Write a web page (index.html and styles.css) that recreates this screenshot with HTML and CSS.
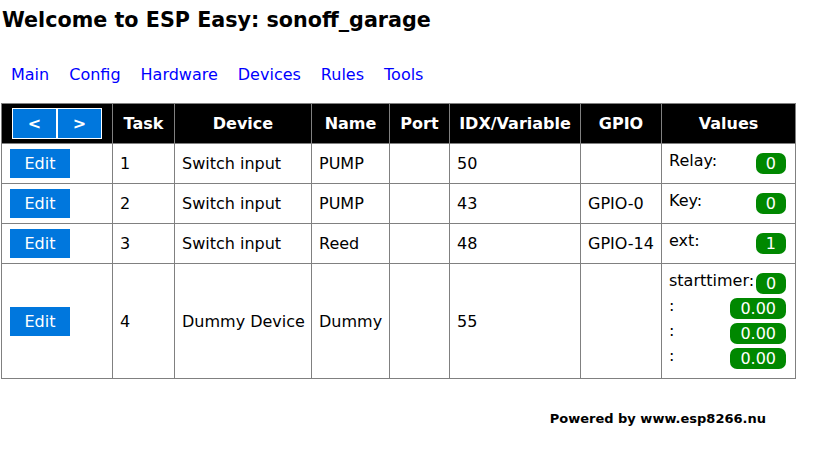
FILE: index.html
```html
<!DOCTYPE html>
<html>
<head>
<meta charset="utf-8">
<link rel="stylesheet" href="styles.css">
<title>ESP Easy</title>
</head>
<body>
<h1 class="title">Welcome to ESP Easy: sonoff_garage</h1>
<nav class="menu">
  <a class="menu-link" href="#">Main</a>
  <a class="menu-link" href="#">Config</a>
  <a class="menu-link" href="#">Hardware</a>
  <a class="menu-link" href="#">Devices</a>
  <a class="menu-link" href="#">Rules</a>
  <a class="menu-link" href="#">Tools</a>
</nav>
<table class="devices">
  <thead>
    <tr>
      <th class="c-edit"><div class="pager"><a class="btn btn-nav" href="#">&lt;</a><a class="btn btn-nav" href="#">&gt;</a></div></th>
      <th class="c-task">Task</th>
      <th class="c-device">Device</th>
      <th class="c-name">Name</th>
      <th class="c-port">Port</th>
      <th class="c-idx">IDX/Variable</th>
      <th class="c-gpio">GPIO</th>
      <th class="c-values">Values</th>
    </tr>
  </thead>
  <tbody>
    <tr>
      <td><a class="btn btn-edit" href="#">Edit</a></td>
      <td>1</td>
      <td>Switch input</td>
      <td>PUMP</td>
      <td></td>
      <td>50</td>
      <td></td>
      <td><div class="val"><span class="val-label">Relay:</span><span class="badge">0</span></div></td>
    </tr>
    <tr>
      <td><a class="btn btn-edit" href="#">Edit</a></td>
      <td>2</td>
      <td>Switch input</td>
      <td>PUMP</td>
      <td></td>
      <td>43</td>
      <td>GPIO-0</td>
      <td><div class="val"><span class="val-label">Key:</span><span class="badge">0</span></div></td>
    </tr>
    <tr>
      <td><a class="btn btn-edit" href="#">Edit</a></td>
      <td>3</td>
      <td>Switch input</td>
      <td>Reed</td>
      <td></td>
      <td>48</td>
      <td>GPIO-14</td>
      <td><div class="val"><span class="val-label">ext:</span><span class="badge">1</span></div></td>
    </tr>
    <tr>
      <td><a class="btn btn-edit" href="#">Edit</a></td>
      <td>4</td>
      <td>Dummy Device</td>
      <td>Dummy</td>
      <td></td>
      <td>55</td>
      <td></td>
      <td>
        <div class="val"><span class="val-label">starttimer:</span><span class="badge">0</span></div>
        <div class="val"><span class="val-label">:</span><span class="badge">0.00</span></div>
        <div class="val"><span class="val-label">:</span><span class="badge">0.00</span></div>
        <div class="val"><span class="val-label">:</span><span class="badge">0.00</span></div>
      </td>
    </tr>
  </tbody>
</table>
<div class="footer"><h6 class="powered">Powered by www.esp8266.nu</h6></div>
</body>
</html>
```
FILE: styles.css
```css
* {
  font-family: "DejaVu Sans", sans-serif;
  font-size: 16px;
  box-sizing: border-box;
}
html, body {
  margin: 0;
  padding: 0;
  background: #fff;
}
.title {
  margin: 0;
  padding: 8px 0 0 2px;
  font-size: 20.7px;
  line-height: 25px;
  font-weight: bold;
  color: #000;
}
.menu {
  display: flex;
  gap: 20px;
  margin-top: 32px;
  padding-left: 11px;
  line-height: 19px;
}
.menu-link {
  color: #0000ff;
  text-decoration: none;
}
.devices {
  margin: 19px 0 0 1px;
  border-collapse: separate;
  border-spacing: 0;
  table-layout: fixed;
  width: 795px;
  border-top: 1px solid #808080;
  border-left: 1px solid #808080;
  color: #000;
}
.devices th,
.devices td {
  border-right: 1px solid #808080;
  border-bottom: 1px solid #808080;
  line-height: 19px;
  vertical-align: middle;
  white-space: nowrap;
}
.devices th {
  background: #000;
  color: #fff;
  font-weight: bold;
  height: 40px;
  padding: 0;
  text-align: center;
}
.devices td {
  padding: 7px;
  text-align: left;
}
.c-edit { width: 111px; }
.c-task { width: 62px; }
.c-device { width: 137px; }
.c-name { width: 78px; }
.c-port { width: 60px; }
.c-idx { width: 131px; }
.c-gpio { width: 81px; }
.c-values { width: 134px; }
.pager {
  display: flex;
  padding-left: 10px;
}
.btn {
  background: #0077dd;
  color: #fff;
  border: 1px solid #fff;
  text-decoration: none;
}
.btn-nav {
  display: block;
  font-weight: bold;
  width: 45px;
  height: 31px;
  line-height: 19px;
  text-align: center;
  padding: 5px 0;
}
.btn-edit {
  display: inline;
  padding: 5px 14.5px;
}
.val {
  display: flex;
  justify-content: space-between;
  align-items: flex-start;
  height: 25px;
}
.val-label {
  flex-shrink: 0;
  line-height: 19px;
}
.badge {
  flex-shrink: 0;
  margin: 2px;
  padding: 1px 10px;
  border-radius: 7px;
  background: #008800;
  color: #fff;
  line-height: 19px;
}
.footer {
  width: 796px;
  margin-top: 32px;
  text-align: right;
  padding-right: 30px;
}
.powered {
  margin: 0;
  font-size: 13px;
  line-height: 16px;
  font-weight: bold;
  color: #000;
}
```
